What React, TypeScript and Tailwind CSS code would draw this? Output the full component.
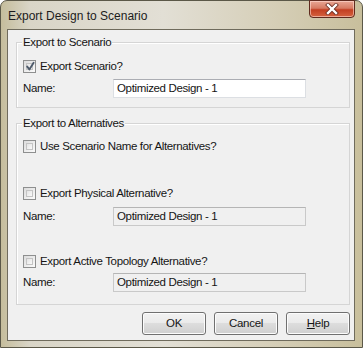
import React from "react";

const font = { fontFamily: '"Liberation Sans", Arial, sans-serif' };

function CheckBox({ checked }: { checked?: boolean }) {
  return (
    <div className="relative w-[13px] h-[13px] shrink-0 border border-[#8e8f8f] bg-[linear-gradient(135deg,#dcdcdc,#fbfbfb)] p-[2px]">
      <div className="w-full h-full border border-[#c4c4c4] bg-[linear-gradient(135deg,#e4e4e4,#f9f9f9)]" />
      {checked && (
        <svg className="absolute left-[1px] top-[0px]" width="11" height="11" viewBox="0 0 11 11">
          <path d="M2.2 5.6 L4.4 8.4 L8.6 1.8" fill="none" stroke="#4d5a6a" strokeWidth="1.9" strokeLinejoin="round" strokeLinecap="round" />
        </svg>
      )}
    </div>
  );
}

function CheckRow({ label, checked }: { label: string; checked?: boolean }) {
  return (
    <div className="flex items-center h-[13px] pl-[6px] gap-[4px]">
      <CheckBox checked={checked} />
      <span className="text-[11.5px] leading-none text-[#151515] tracking-[-0.35px]">{label}</span>
    </div>
  );
}

function NameRow({ disabled }: { disabled?: boolean }) {
  return (
    <div className="flex items-center h-[19px] pl-[6px]">
      <span className="w-[90px] text-[11.5px] leading-none text-[#151515] tracking-[-0.35px]">Name:</span>
      <div
        className={
          "w-[193px] h-[19px] flex items-center pl-[3px] border " +
          (disabled
            ? "bg-[#f0f0f0] border-[#c9c9c9] border-t-[#b5b5b5]"
            : "bg-white border-[#dcdfe3] border-t-[#abadb3]")
        }
      >
        <span className="text-[11.5px] leading-none text-[#151515] tracking-[-0.35px]">Optimized Design - 1</span>
      </div>
    </div>
  );
}

function Group({ title, children, className }: { title: string; children: React.ReactNode; className?: string }) {
  return (
    <div className={"relative border border-[#d5d5d5] shadow-[inset_1px_1px_0_#ffffff] " + (className || "")}>
      <span className="absolute left-[5px] -top-[7px] px-[1px] bg-[#f0f0f0] text-[11.5px] leading-[13px] text-[#151515] tracking-[-0.35px]">
        {title}
      </span>
      {children}
    </div>
  );
}

function Btn({ children }: { children: React.ReactNode }) {
  return (
    <div className="w-[64px] h-[23px] flex items-center justify-center rounded-[3px] border border-[#707070] bg-[linear-gradient(#f2f2f2_0%,#ebebeb_45%,#dddddd_50%,#cfcfcf_100%)] shadow-[inset_0_0_0_1px_#fcfcfc]">
      <span className="text-[11.5px] leading-none text-[#151515] tracking-[-0.3px]">{children}</span>
    </div>
  );
}

export default function App() {
  return (
    <div style={font} className="w-[363px] h-[348px] overflow-hidden bg-white">
      <div className="w-[363px] h-[348px] flex flex-col rounded-t-[7px] border border-[#5b5848] bg-[linear-gradient(90deg,#c5bd9c_0%,#d9d5c7_8%,#e2dfd5_45%,#d6cfb8_75%,#c8bf9c_100%)]">
        <div className="h-[28px] flex items-start relative">
          <span className="pl-[7px] pt-[8px] text-[12px] leading-[14px] text-[#1c1c1c]">Export Design to Scenario</span>
          <div className="ml-auto mr-[7px] w-[46px] h-[18px] -mt-px rounded-b-[4px] border border-[#5f2a1e] bg-[linear-gradient(#e9a795_0%,#d67b63_45%,#c33f22_55%,#d5623f_100%)] shadow-[inset_0_0_0_1px_rgba(255,220,210,0.6)] flex items-center justify-center">
            <svg width="14" height="12" viewBox="0 0 14 12">
              <path d="M3 2 L11 10 M11 2 L3 10" stroke="#6b2d22" strokeWidth="4" strokeLinecap="square" />
              <path d="M3 2 L11 10 M11 2 L3 10" stroke="#ffffff" strokeWidth="2.4" strokeLinecap="square" />
            </svg>
          </div>
        </div>
        <div className="ml-[6px] mr-[7px] mb-[6px] flex-1 border border-[#6f6b5c] bg-[#f0f0f0] flex flex-col pl-[8px] pr-[4px] pt-[12px] pb-[5px]">
          <Group title="Export to Scenario" className="pt-[17px] pb-[9px] flex flex-col gap-[6px]">
            <CheckRow label="Export Scenario?" checked />
            <NameRow />
          </Group>
          <Group title="Export to Alternatives" className="mt-[15px] pt-[16px] pb-[12px] flex flex-col">
            <CheckRow label="Use Scenario Name for Alternatives?" />
            <div className="h-[34px]" />
            <CheckRow label="Export Physical Alternative?" />
            <div className="h-[7px]" />
            <NameRow disabled />
            <div className="h-[29px]" />
            <CheckRow label="Export Active Topology Alternative?" />
            <div className="h-[5px]" />
            <NameRow disabled />
          </Group>
          <div className="mt-[7px] flex justify-end gap-[8px]">
            <Btn>OK</Btn>
            <Btn>Cancel</Btn>
            <Btn>
              <span className="underline underline-offset-[1px]">H</span>elp
            </Btn>
          </div>
        </div>
      </div>
    </div>
  );
}
